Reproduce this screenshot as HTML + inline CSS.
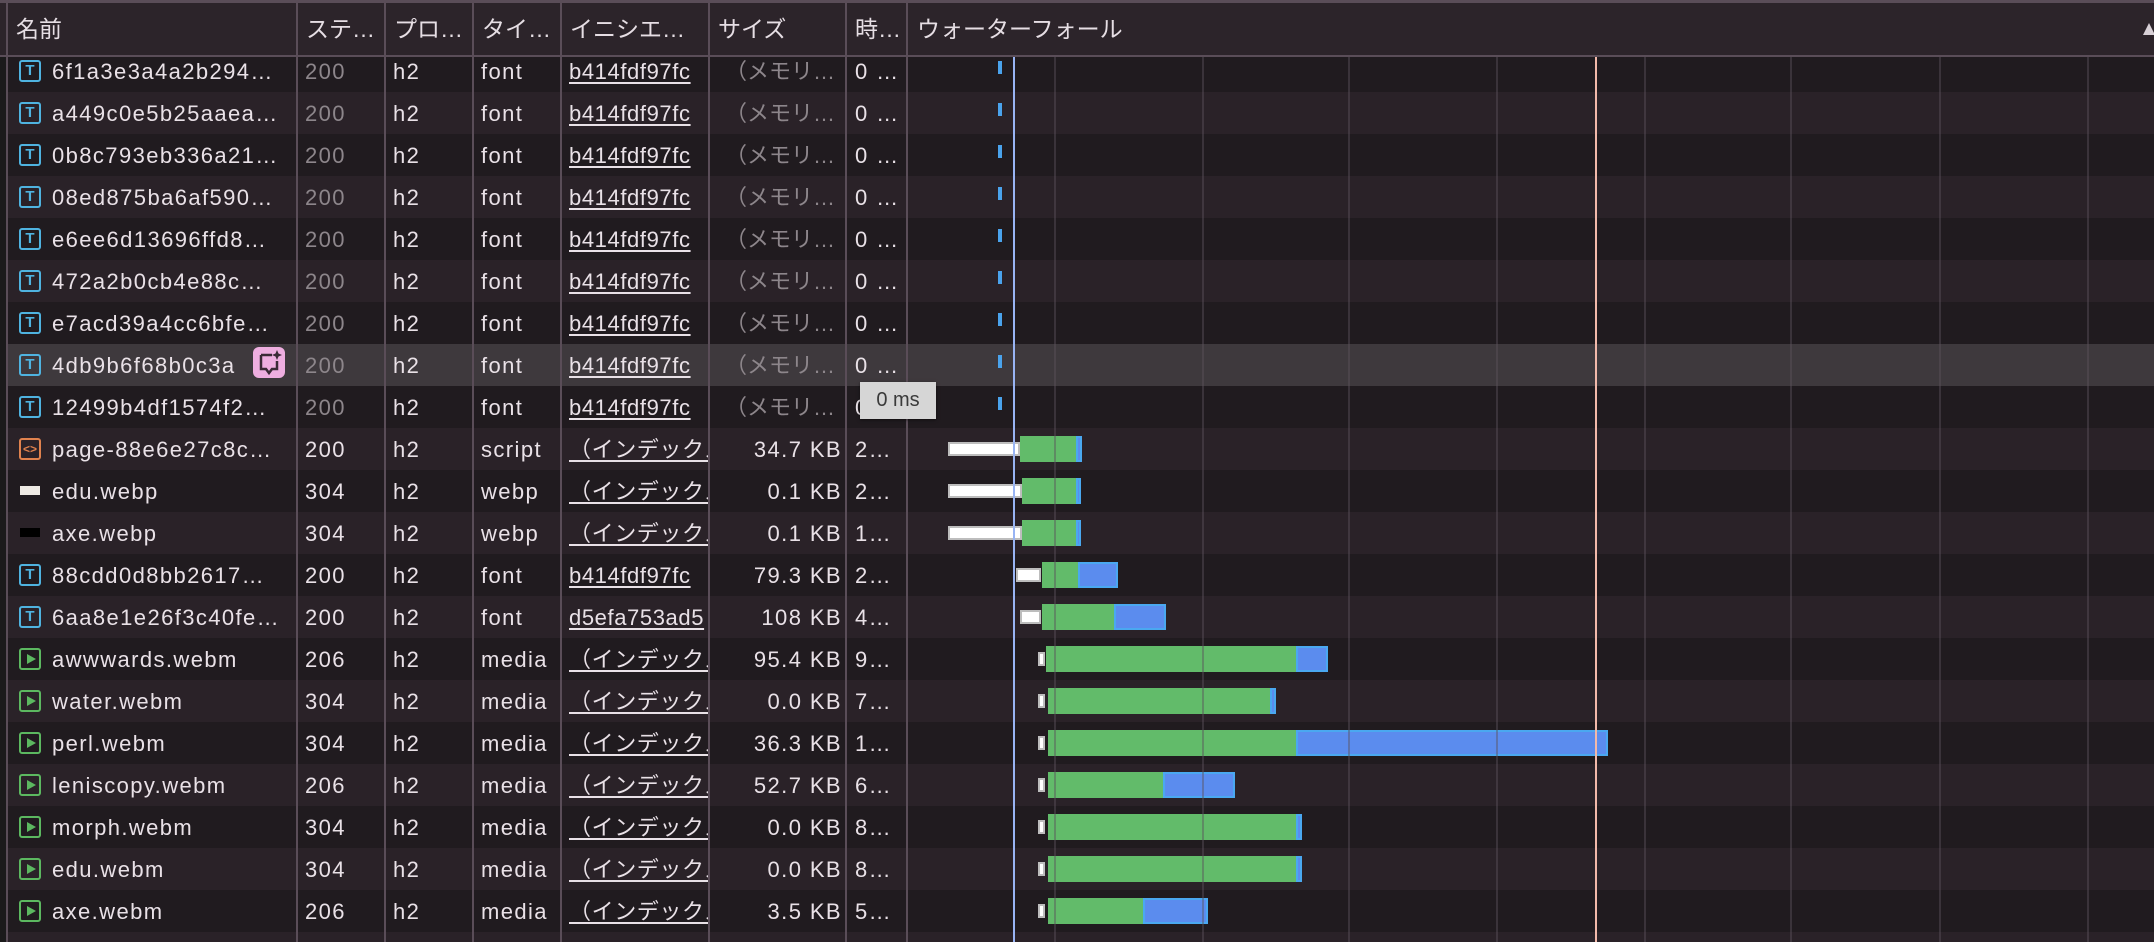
<!DOCTYPE html>
<html><head><meta charset="utf-8"><style>
*{margin:0;padding:0;box-sizing:border-box}
html,body{width:2154px;height:942px;overflow:hidden}
body{background:#201b1f;font-family:"Liberation Sans","Noto Sans CJK JP",sans-serif;font-size:22px;color:#e9e1e7;position:relative}
.abs{position:absolute}
.top{left:0;top:0;width:2154px;height:3px;background:#5a4d58}
.hdr{left:0;top:3px;width:2154px;height:52px;background:#2c242a}
.hb{left:0;top:55px;width:2154px;height:2px;background:#5a4d58}
.ht{position:absolute;top:3px;line-height:52px;color:#e6dee4;font-size:23px;white-space:nowrap}
.row{position:absolute;left:7px;width:2147px;height:42px;line-height:43px;letter-spacing:1.4px}
.d{background:#201b1f}.l{background:#2a2228}.h{background:#3e393d}
.c{position:absolute;top:0;white-space:nowrap;overflow:hidden}
.n{left:45px;width:240px;text-overflow:ellipsis}
.s{left:298px}.p{left:386px}.t{left:474px}
.i{left:562px;width:139px;text-decoration:underline;text-underline-offset:3px;letter-spacing:0.6px}
.z{right:1312px;text-align:right}
.mm{left:718px;width:120px;letter-spacing:0}
.m{left:848px}
.g{color:#8d868b}
.vl{position:absolute;top:3px;width:2px;height:939px;background:#5a4d58}
.gl{position:absolute;top:57px;width:2px;height:885px;background:rgba(90,82,92,.45)}
.ico{position:absolute;left:12px;top:10px;width:22px;height:22px;border:2px solid #4fb3e0;border-radius:3px;color:#4fb3e0;font-size:15px;line-height:18px;text-align:center;font-weight:bold;letter-spacing:0}
.vid{border-color:#5cb860}
.vid:after{content:"";position:absolute;left:6px;top:4px;border-left:9px solid #5cb860;border-top:5.5px solid transparent;border-bottom:5.5px solid transparent}
.scr{border-color:#e0824e;color:#e0824e;font-size:12px;line-height:18px}
.tk{position:absolute;left:991px;top:11px;width:4px;height:13px;background:#4aa3ec}
.wb{position:absolute;height:14px;top:14px;background:#fff;border:2px solid #bdbdbd}
.gr{position:absolute;top:8px;height:26px;background:#62bb6a}
.bl{position:absolute;top:8px;height:26px;background:#5b8cee;border:2px solid #4aa8f0}
</style></head><body>
<div class="abs" style="left:0;top:0;width:7px;height:942px;background:#1b1a1b"></div>

<div class="row d" style="top:50px"><span class="ico">T</span><span class="c n">6f1a3e3a4a2b294…</span><span class="c s g">200</span><span class="c p">h2</span><span class="c t">font</span><span class="c i">b414fdf97fc</span><span class="c mm g">（メモリ…</span><span class="c m">0 …</span><span class="tk"></span></div>
<div class="row l" style="top:92px"><span class="ico">T</span><span class="c n">a449c0e5b25aaea…</span><span class="c s g">200</span><span class="c p">h2</span><span class="c t">font</span><span class="c i">b414fdf97fc</span><span class="c mm g">（メモリ…</span><span class="c m">0 …</span><span class="tk"></span></div>
<div class="row d" style="top:134px"><span class="ico">T</span><span class="c n">0b8c793eb336a21…</span><span class="c s g">200</span><span class="c p">h2</span><span class="c t">font</span><span class="c i">b414fdf97fc</span><span class="c mm g">（メモリ…</span><span class="c m">0 …</span><span class="tk"></span></div>
<div class="row l" style="top:176px"><span class="ico">T</span><span class="c n">08ed875ba6af590…</span><span class="c s g">200</span><span class="c p">h2</span><span class="c t">font</span><span class="c i">b414fdf97fc</span><span class="c mm g">（メモリ…</span><span class="c m">0 …</span><span class="tk"></span></div>
<div class="row d" style="top:218px"><span class="ico">T</span><span class="c n">e6ee6d13696ffd8…</span><span class="c s g">200</span><span class="c p">h2</span><span class="c t">font</span><span class="c i">b414fdf97fc</span><span class="c mm g">（メモリ…</span><span class="c m">0 …</span><span class="tk"></span></div>
<div class="row l" style="top:260px"><span class="ico">T</span><span class="c n">472a2b0cb4e88c…</span><span class="c s g">200</span><span class="c p">h2</span><span class="c t">font</span><span class="c i">b414fdf97fc</span><span class="c mm g">（メモリ…</span><span class="c m">0 …</span><span class="tk"></span></div>
<div class="row d" style="top:302px"><span class="ico">T</span><span class="c n">e7acd39a4cc6bfe…</span><span class="c s g">200</span><span class="c p">h2</span><span class="c t">font</span><span class="c i">b414fdf97fc</span><span class="c mm g">（メモリ…</span><span class="c m">0 …</span><span class="tk"></span></div>
<div class="row h" style="top:344px"><span class="ico">T</span><span class="c n" style="width:200px">4db9b6f68b0c3a</span><span class="abs" style="left:246px;top:3px;width:32px;height:31px;background:#eeaee0;border-radius:6px"><svg width="32" height="31" viewBox="0 0 32 31"><path d="M8 8h11M8 8v14h5l3 4 3-4h5v-8" fill="none" stroke="#3a2a36" stroke-width="2.5"/><path d="M24 3l1.5 3.5L29 8l-3.5 1.5L24 13l-1.5-3.5L19 8l3.5-1.5z" fill="#3a2a36"/></svg></span><span class="c s g">200</span><span class="c p">h2</span><span class="c t">font</span><span class="c i">b414fdf97fc</span><span class="c mm g">（メモリ…</span><span class="c m">0 …</span><span class="tk"></span></div>
<div class="row d" style="top:386px"><span class="ico">T</span><span class="c n">12499b4df1574f2…</span><span class="c s g">200</span><span class="c p">h2</span><span class="c t">font</span><span class="c i">b414fdf97fc</span><span class="c mm g">（メモリ…</span><span class="c m">0 …</span><span class="tk"></span></div>
<div class="row l" style="top:428px"><span class="ico scr">&lt;&gt;</span><span class="c n">page-88e6e27c8c…</span><span class="c s">200</span><span class="c p">h2</span><span class="c t">script</span><span class="c i">（インデックス</span><span class="c z">34.7 KB</span><span class="c m">2…</span><span class="wb" style="left:941px;width:72px"></span><span class="gr" style="left:1013px;width:58px"></span><span class="bl" style="left:1069px;width:6px"></span></div>
<div class="row d" style="top:470px"><span class="abs" style="left:13px;top:16px;width:20px;height:9px;background:#eeeae4"></span><span class="c n">edu.webp</span><span class="c s">304</span><span class="c p">h2</span><span class="c t">webp</span><span class="c i">（インデックス</span><span class="c z">0.1 KB</span><span class="c m">2…</span><span class="wb" style="left:941px;width:74px"></span><span class="gr" style="left:1015px;width:56px"></span><span class="bl" style="left:1069px;width:5px"></span></div>
<div class="row l" style="top:512px"><span class="abs" style="left:13px;top:16px;width:20px;height:9px;background:#000"></span><span class="c n">axe.webp</span><span class="c s">304</span><span class="c p">h2</span><span class="c t">webp</span><span class="c i">（インデックス</span><span class="c z">0.1 KB</span><span class="c m">1…</span><span class="wb" style="left:941px;width:74px"></span><span class="gr" style="left:1015px;width:56px"></span><span class="bl" style="left:1069px;width:5px"></span></div>
<div class="row d" style="top:554px"><span class="ico">T</span><span class="c n">88cdd0d8bb2617…</span><span class="c s">200</span><span class="c p">h2</span><span class="c t">font</span><span class="c i">b414fdf97fc</span><span class="c z">79.3 KB</span><span class="c m">2…</span><span class="wb" style="left:1009px;width:25px"></span><span class="gr" style="left:1035px;width:38px"></span><span class="bl" style="left:1071px;width:40px"></span></div>
<div class="row l" style="top:596px"><span class="ico">T</span><span class="c n">6aa8e1e26f3c40fe…</span><span class="c s">200</span><span class="c p">h2</span><span class="c t">font</span><span class="c i">d5efa753ad5</span><span class="c z">108 KB</span><span class="c m">4…</span><span class="wb" style="left:1013px;width:21px"></span><span class="gr" style="left:1035px;width:74px"></span><span class="bl" style="left:1107px;width:52px"></span></div>
<div class="row d" style="top:638px"><span class="ico vid"></span><span class="c n">awwwards.webm</span><span class="c s">206</span><span class="c p">h2</span><span class="c t">media</span><span class="c i">（インデックス</span><span class="c z">95.4 KB</span><span class="c m">9…</span><span class="wb" style="left:1031px;width:7px"></span><span class="gr" style="left:1039px;width:251px"></span><span class="bl" style="left:1289px;width:32px"></span></div>
<div class="row l" style="top:680px"><span class="ico vid"></span><span class="c n">water.webm</span><span class="c s">304</span><span class="c p">h2</span><span class="c t">media</span><span class="c i">（インデックス</span><span class="c z">0.0 KB</span><span class="c m">7…</span><span class="wb" style="left:1031px;width:7px"></span><span class="gr" style="left:1041px;width:224px"></span><span class="bl" style="left:1263px;width:6px"></span></div>
<div class="row d" style="top:722px"><span class="ico vid"></span><span class="c n">perl.webm</span><span class="c s">304</span><span class="c p">h2</span><span class="c t">media</span><span class="c i">（インデックス</span><span class="c z">36.3 KB</span><span class="c m">1…</span><span class="wb" style="left:1031px;width:7px"></span><span class="gr" style="left:1041px;width:249px"></span><span class="bl" style="left:1289px;width:312px"></span></div>
<div class="row l" style="top:764px"><span class="ico vid"></span><span class="c n">leniscopy.webm</span><span class="c s">206</span><span class="c p">h2</span><span class="c t">media</span><span class="c i">（インデックス</span><span class="c z">52.7 KB</span><span class="c m">6…</span><span class="wb" style="left:1031px;width:7px"></span><span class="gr" style="left:1041px;width:116px"></span><span class="bl" style="left:1156px;width:72px"></span></div>
<div class="row d" style="top:806px"><span class="ico vid"></span><span class="c n">morph.webm</span><span class="c s">304</span><span class="c p">h2</span><span class="c t">media</span><span class="c i">（インデックス</span><span class="c z">0.0 KB</span><span class="c m">8…</span><span class="wb" style="left:1031px;width:7px"></span><span class="gr" style="left:1041px;width:249px"></span><span class="bl" style="left:1289px;width:6px"></span></div>
<div class="row l" style="top:848px"><span class="ico vid"></span><span class="c n">edu.webm</span><span class="c s">304</span><span class="c p">h2</span><span class="c t">media</span><span class="c i">（インデックス</span><span class="c z">0.0 KB</span><span class="c m">8…</span><span class="wb" style="left:1031px;width:7px"></span><span class="gr" style="left:1041px;width:249px"></span><span class="bl" style="left:1289px;width:6px"></span></div>
<div class="row d" style="top:890px"><span class="ico vid"></span><span class="c n">axe.webm</span><span class="c s">206</span><span class="c p">h2</span><span class="c t">media</span><span class="c i">（インデックス</span><span class="c z">3.5 KB</span><span class="c m">5…</span><span class="wb" style="left:1031px;width:7px"></span><span class="gr" style="left:1041px;width:96px"></span><span class="bl" style="left:1136px;width:65px"></span></div>
<div class="row l" style="top:932px;height:10px"></div>

<div class="gl" style="left:1054px"></div><div class="gl" style="left:1202px"></div><div class="gl" style="left:1348px"></div><div class="gl" style="left:1496px"></div><div class="gl" style="left:1644px"></div><div class="gl" style="left:1790px"></div><div class="gl" style="left:1939px"></div><div class="gl" style="left:2087px"></div>
<div class="abs" style="left:1013px;top:57px;width:2px;height:885px;background:#98b4f4"></div>
<div class="abs" style="left:1595px;top:57px;width:2px;height:885px;background:#f2b9aa"></div>

<div class="abs top"></div>
<div class="abs hdr"></div>
<div class="abs hb"></div>
<span class="ht" style="left:16px">名前</span>
<span class="ht" style="left:306px">ステ…</span>
<span class="ht" style="left:394px">プロ…</span>
<span class="ht" style="left:482px">タイ…</span>
<span class="ht" style="left:570px">イニシエ…</span>
<span class="ht" style="left:718px">サイズ</span>
<span class="ht" style="left:855px">時…</span>
<span class="ht" style="left:917px">ウォーターフォール</span>
<div class="abs" style="left:2143px;top:23px;border-left:6px solid transparent;border-right:6px solid transparent;border-bottom:12px solid #d8d0d6"></div>

<div class="vl" style="left:6px"></div>
<div class="vl" style="left:296px"></div><div class="vl" style="left:384px"></div><div class="vl" style="left:472px"></div><div class="vl" style="left:560px"></div><div class="vl" style="left:708px"></div><div class="vl" style="left:845px"></div><div class="vl" style="left:906px"></div>

<div class="abs" style="left:860px;top:382px;width:76px;height:37px;background:#d6d6d6;color:#3a3a3a;font-size:20px;line-height:37px;text-align:center;box-shadow:0 1px 3px rgba(0,0,0,.5)">0 ms</div>
</body></html>
